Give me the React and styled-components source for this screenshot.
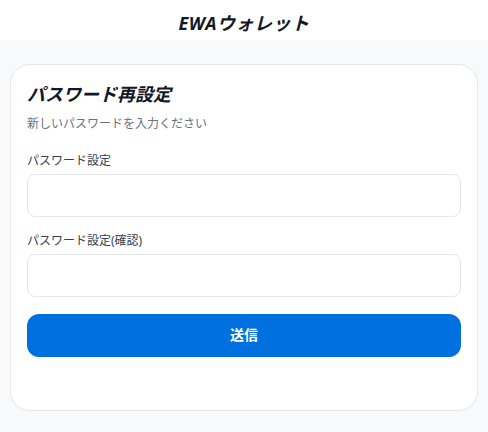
import React from "react";
import styled, { createGlobalStyle } from "styled-components";

const Global = createGlobalStyle`
  html, body { margin: 0; padding: 0; background: #f8f9fb; }
  body { font-family: "Noto Sans", "Noto Sans CJK JP", sans-serif; }
  * { box-sizing: border-box; }
`;

const Page = styled.div`
  min-height: 432px;
  background: #f8f9fb;
  display: flex;
  flex-direction: column;
`;

const Header = styled.header`
  height: 40px;
  background: #ffffff;
  display: flex;
  align-items: center;
  justify-content: center;
`;

const AppTitle = styled.h1`
  margin: 0;
  font-size: 18px;
  font-weight: 700;
  font-style: italic;
  color: #111827;
  letter-spacing: 0.5px;
  line-height: 1;
  padding-top: 6px;
`;

const Main = styled.main`
  padding: 24px 10px 0;
`;

const Card = styled.section`
  background: #ffffff;
  border: 1px solid #e5e7eb;
  border-radius: 20px;
  padding: 16px 16px 53px;
  display: flex;
  flex-direction: column;
`;

const Heading = styled.h2`
  margin: 0;
  font-size: 18px;
  line-height: 26px;
  font-weight: 700;
  font-style: italic;
  color: #111827;
`;

const Sub = styled.p`
  margin: 9px 0 21px;
  font-size: 12px;
  line-height: 16px;
  color: #6b7280;
`;

const Field = styled.div`
  display: flex;
  flex-direction: column;
  margin-bottom: ${(p) => p.$gap}px;
`;

const Label = styled.label`
  font-size: 12px;
  line-height: 16px;
  color: #374151;
  margin-bottom: 5px;
`;

const Input = styled.input`
  height: 43px;
  border: 1px solid #e5e7eb;
  border-radius: 8px;
  background: #ffffff;
  padding: 0 12px;
  font-size: 14px;
  outline: none;
`;

const Submit = styled.button`
  height: 43px;
  border: none;
  border-radius: 12px;
  background: #0070e0;
  color: #ffffff;
  font-family: inherit;
  font-size: 14px;
  font-weight: 700;
  line-height: 1;
  padding: 0 0 2px;
  cursor: pointer;
`;

export default function App() {
  return (
    <>
      <Global />
      <Page>
        <Header>
          <AppTitle>EWAウォレット</AppTitle>
        </Header>
        <Main>
          <Card>
            <Heading>パスワード再設定</Heading>
            <Sub>新しいパスワードを入力ください</Sub>
            <Field $gap={16}>
              <Label>パスワード設定</Label>
              <Input type="password" />
            </Field>
            <Field $gap={17}>
              <Label>パスワード設定(確認)</Label>
              <Input type="password" />
            </Field>
            <Submit>送信</Submit>
          </Card>
        </Main>
      </Page>
    </>
  );
}
